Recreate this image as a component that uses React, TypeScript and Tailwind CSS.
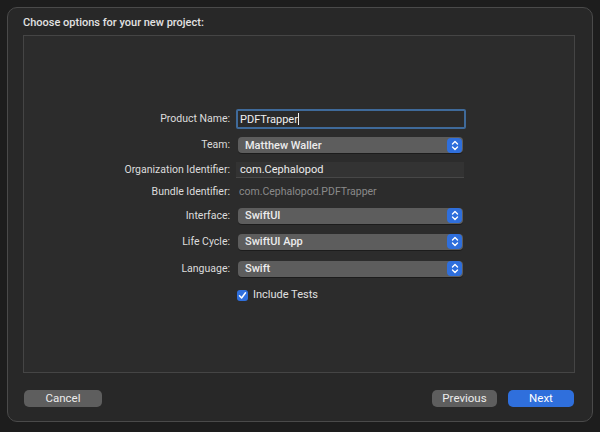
import React from "react";

const font = { fontFamily: 'Roboto, "Liberation Sans", Arial, sans-serif' };

// blue up/down stepper used by the popup buttons
const Stepper = () => (
  <div className="w-[15px] h-[15px] rounded-[4px] bg-[#2f6fdc] flex items-center justify-center mr-[1px]">
    <svg width="8" height="11" viewBox="0 0 8 11" fill="none">
      <path d="M1.5 4 L4 1.5 L6.5 4" stroke="white" strokeWidth="1.4" strokeLinecap="round" strokeLinejoin="round" />
      <path d="M1.5 7 L4 9.5 L6.5 7" stroke="white" strokeWidth="1.4" strokeLinecap="round" strokeLinejoin="round" />
    </svg>
  </div>
);

const Popup = ({ value }: { value: string }) => (
  <div className="ml-[2px] w-[225px] h-[16px] rounded-[4px] bg-[#5d5d5d] flex items-center justify-between shadow-[0_1px_0_rgba(0,0,0,0.35)]">
    <span className="pl-[7px] text-[11px] font-medium text-[#ececec] leading-none">{value}</span>
    <Stepper />
  </div>
);

const Row = ({ label, h, children }: { label: string; h: string; children: React.ReactNode }) => (
  <div className={`flex items-center ${h}`}>
    <div className="w-[206px] text-right text-[10.5px] text-[#dcdcdc]">{label}</div>
    <div className="ml-[6px] flex items-center">{children}</div>
  </div>
);

export default function App() {
  return (
    <div className="w-[600px] h-[432px] bg-[#1d1d1d] p-[7px]" style={font}>
      <div className="w-[586px] h-[415px] rounded-[10px] border border-[#4a4a4a] bg-[#282828] flex flex-col">
        <div className="pl-[15px] pt-[7px] h-[27px] text-[11px] font-medium text-[#e2e2e2]">
          Choose options for your new project:
        </div>
        <div className="ml-[15px] mr-[17px] h-[338px] border border-[#454545] bg-[#2c2c2c] pt-[70px]">
          <Row label="Product Name:" h="h-[26px]">
            <div className="w-[230px] h-[20px] border-[2px] border-[#3f6a9a] rounded-[2px] bg-[#2a2a2a] flex items-center">
              <span className="pl-[2px] text-[11px] text-[#f0f0f0] leading-none">PDFTrapper</span>
              <span className="w-[1px] h-[12px] bg-[#f0f0f0]" />
            </div>
          </Row>
          <Row label="Team:" h="h-[26px]">
            <Popup value="Matthew Waller" />
          </Row>
          <Row label="Organization Identifier:" h="h-[23px]">
            <div className="w-[228px] h-[16px] bg-[#333333] border-b border-[#474747] flex items-center">
              <span className="pl-[4px] text-[11px] text-[#ececec] leading-none">com.Cephalopod</span>
            </div>
          </Row>
          <Row label="Bundle Identifier:" h="h-[22px]">
            <span className="pl-[3px] text-[10.5px] text-[#8a8a8a]">com.Cephalopod.PDFTrapper</span>
          </Row>
          <Row label="Interface:" h="h-[25px]">
            <Popup value="SwiftUI" />
          </Row>
          <Row label="Life Cycle:" h="h-[27px]">
            <Popup value="SwiftUI App" />
          </Row>
          <Row label="Language:" h="h-[27px]">
            <Popup value="Swift" />
          </Row>
          <div className="flex items-center h-[26px] pl-[213px]">
            <div className="w-[11px] h-[11px] rounded-[3px] bg-[#2f6fdc] flex items-center justify-center">
              <svg width="9" height="9" viewBox="0 0 9 9" fill="none">
                <path d="M1.5 4.8 L3.6 7 L7.5 1.8" stroke="white" strokeWidth="1.5" strokeLinecap="round" strokeLinejoin="round" />
              </svg>
            </div>
            <span className="ml-[5px] text-[11px] text-[#e0e0e0]">Include Tests</span>
          </div>
        </div>
        <div className="flex items-center pl-[16px] pr-[18px] pt-[17px]">
          <button className="w-[78px] h-[17px] rounded-[5px] bg-[#5e5e5e] text-[11.5px] text-[#ececec] leading-none">
            Cancel
          </button>
          <div className="flex-1" />
          <button className="w-[65px] h-[17px] rounded-[5px] bg-[#5e5e5e] text-[11.5px] text-[#ececec] leading-none">
            Previous
          </button>
          <button className="ml-[11px] w-[66px] h-[17px] rounded-[5px] bg-[#2f6fdc] text-[11.5px] text-white leading-none">
            Next
          </button>
        </div>
      </div>
    </div>
  );
}
